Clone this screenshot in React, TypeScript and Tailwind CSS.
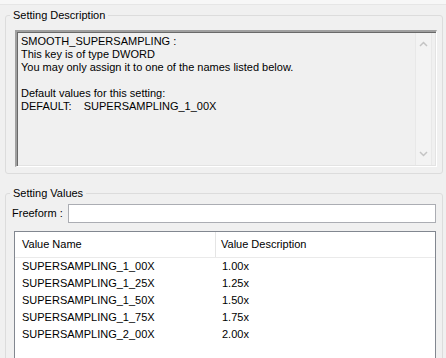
import React from "react";

const rows = [
  ["SUPERSAMPLING_1_00X", "1.00x"],
  ["SUPERSAMPLING_1_25X", "1.25x"],
  ["SUPERSAMPLING_1_50X", "1.50x"],
  ["SUPERSAMPLING_1_75X", "1.75x"],
  ["SUPERSAMPLING_2_00X", "2.00x"],
];

const Chevron = ({ up }: { up?: boolean }) => (
  <svg width="9" height="6" viewBox="0 0 9 6" className="block">
    <path
      d={up ? "M1 5 L4.5 1.5 L8 5" : "M1 1 L4.5 4.5 L8 1"}
      fill="none"
      stroke="#c4c4c4"
      strokeWidth="1.5"
    />
  </svg>
);

const App = () => {
  return (
    <div
      className="w-[446px] h-[358px] overflow-hidden bg-[#f0f0f0] text-[11px] text-black leading-[13px]"
      style={{ fontFamily: '"Liberation Sans", Arial, sans-serif' }}
    >
      <div className="h-[5px] bg-[#f7f7f7] border-b border-[#e6e6e6]" />

      <fieldset className="ml-[5px] mr-[3px] mt-[4px] border border-[#dcdcdc] rounded-[3px] pl-[9px] pr-[5px] pb-[5px] pt-[8px] h-[165px]">
        <legend className="px-[3px] -ml-[5px]">Setting Description</legend>
        <div className="flex h-[137px] border-t-2 border-l-2 border-t-[#a0a0a0] border-l-[#a0a0a0] border-b border-r border-b-white border-r-white shadow-[inset_1px_1px_0_#696969,inset_-1px_-1px_0_#e3e3e3]">
          <div className="flex-1 pl-[4px] pt-[3px]">
            <div>SMOOTH_SUPERSAMPLING :</div>
            <div>This key is of type DWORD</div>
            <div>You may only assign it to one of the names listed below.</div>
            <div>&nbsp;</div>
            <div>Default values for this setting:</div>
            <div className="whitespace-pre">DEFAULT:    SUPERSAMPLING_1_00X</div>
          </div>
          <div className="w-[17px] my-[1px] mr-[4px] border-l border-r border-[#e8e8e8] bg-[#f3f3f3] flex flex-col justify-between items-center py-[8px]">
            <Chevron up />
            <Chevron />
          </div>
        </div>
      </fieldset>

      <fieldset className="ml-[5px] mr-[3px] mt-[13px] border border-[#dcdcdc] rounded-[3px] pl-[6px] pr-[6px] pt-[4px] h-[200px]">
        <legend className="px-[3px] -ml-[2px]">Setting Values</legend>
        <div className="flex items-center">
          <span className="whitespace-nowrap pr-[5px]">Freeform :</span>
          <div className="flex-1 h-[19px] bg-white border border-[#abadb3]" />
        </div>
        <div className="mt-[8px] ml-[2px] h-[140px] bg-white border border-[#828790]">
          <div className="flex h-[26px] border-b border-[#eaeaea]">
            <div className="w-[201px] pl-[7px] pt-[6px] border-r border-[#e5e5e5]">
              Value Name
            </div>
            <div className="pl-[5px] pt-[6px]">Value Description</div>
          </div>
          {rows.map(([name, desc]) => (
            <div key={name} className="flex h-[17px] items-center">
              <div className="w-[201px] pl-[7px]">{name}</div>
              <div className="pl-[6px]">{desc}</div>
            </div>
          ))}
        </div>
      </fieldset>
    </div>
  );
};

export default App;
